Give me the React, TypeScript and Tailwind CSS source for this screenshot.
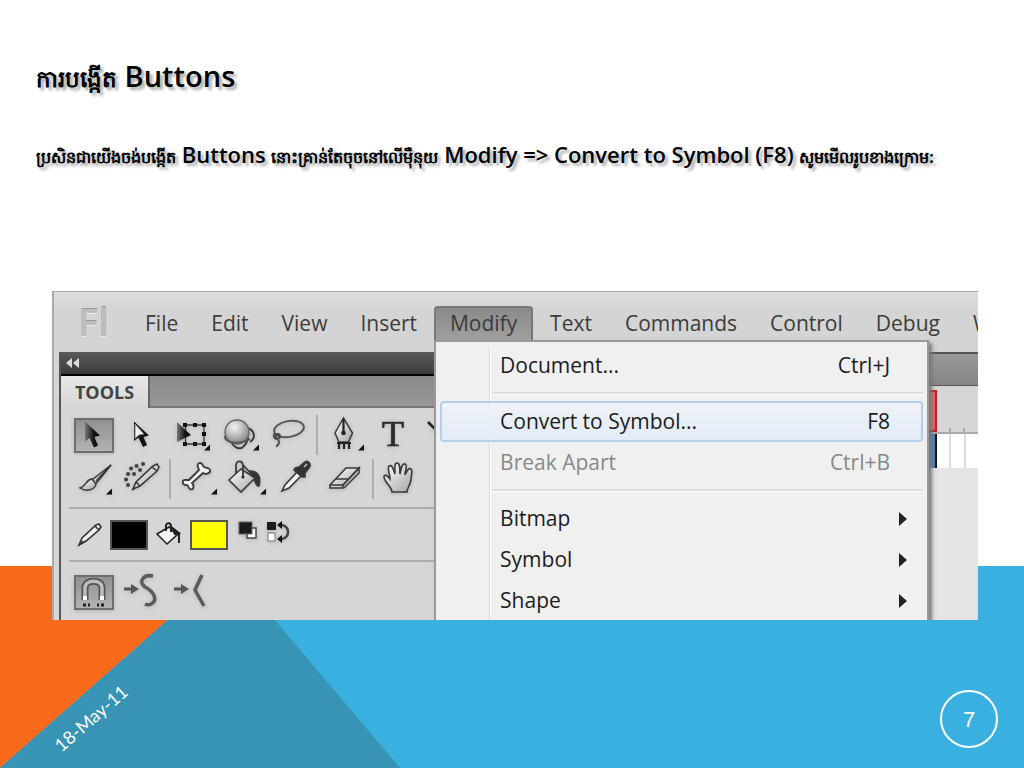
import type { ReactNode } from "react";

const MENUS_LEFT = ["File", "Edit", "View", "Insert"];
const MENUS_RIGHT = ["Text", "Commands", "Control", "Debug", "Window"];

type Entry = { label: string; keys?: string; sub?: boolean; active?: boolean; disabled?: boolean };

const GROUPS: Entry[][] = [
  [{ label: "Document...", keys: "Ctrl+J" }],
  [
    { label: "Convert to Symbol...", keys: "F8", active: true },
    { label: "Break Apart", keys: "Ctrl+B", disabled: true },
  ],
  [
    { label: "Bitmap", sub: true },
    { label: "Symbol", sub: true },
    { label: "Shape", sub: true },
  ],
];

function Flyout() {
  return <path d="M37 37.500L43 31.500V37.500Z" fill="#111" stroke="none" />;
}

function Tool({ label, selected, children }: { label: string; selected?: boolean; children: ReactNode }) {
  return (
    <button type="button" aria-label={label} className="h-11 w-[49px] shrink-0">
      <svg viewBox="0 0 49 44" className="h-11 w-[49px] drop-shadow-sm" fill="none" stroke="#3a3a3a" strokeWidth="1.6">
        {selected && <rect x="6" y="6" width="38" height="33" fill="url(#pressed)" stroke="#6e6e6e" strokeWidth="2" />}
        {children}
      </svg>
    </button>
  );
}

function ToolDivider() {
  return <span className="mx-[2px] h-10 w-[3px] shrink-0 self-center border-l-2 border-[#adadad]" />;
}

function Gradients() {
  return (
    <svg className="absolute size-0" aria-hidden="true">
      <defs>
        <linearGradient id="pressed" x1="0" y1="0" x2="0" y2="1">
          <stop offset="0" stopColor="#8f8f8f" />
          <stop offset="1" stopColor="#b4b4b4" />
        </linearGradient>
        <linearGradient id="dark" x1="0" y1="0" x2="1" y2="0">
          <stop offset="0" stopColor="#777" />
          <stop offset="0.6" stopColor="#111" />
        </linearGradient>
        <linearGradient id="metal" x1="0" y1="0" x2="1" y2="1">
          <stop offset="0" stopColor="#fff" />
          <stop offset="1" stopColor="#a5a5a5" />
        </linearGradient>
        <radialGradient id="ball" cx="0.4" cy="0.3" r="0.7">
          <stop offset="0" stopColor="#f6f6f6" />
          <stop offset="1" stopColor="#858585" />
        </radialGradient>
      </defs>
    </svg>
  );
}

function Toolbox() {
  return (
    <>
      <div className="flex h-11 overflow-hidden">
        <Tool label="Selection" selected>
          <path d="M16 8.500V28.500L20.500 25L25 34.500L29 32.500L25.500 24L31 22.500Z" fill="url(#dark)" stroke="none" />
        </Tool>
        <Tool label="Subselection">
          <path d="M16 8.500V28L20.500 24.500L25 34L29 32L25.500 24L31 22.500Z" fill="#111" stroke="none" />
          <path d="M17 11V25.500L21 22L26 21Z" fill="#f2f2f2" stroke="#777" strokeWidth="1" />
        </Tool>
        <Tool label="Free transform">
          <path d="M18.500 12H37V31H18.500Z" strokeWidth="1.3" />
          <path d="M10 9V29L24 22Z" fill="url(#dark)" stroke="none" />
          <path d="M16 10h4v4h-4zM26 10h4v4h-4zM35 10h4v4h-4zM35 19h4v4h-4zM35 29h4v4h-4zM26 29h4v4h-4zM16 29h4v4h-4z" fill="#111" stroke="none" />
          <Flyout />
        </Tool>
        <Tool label="3D rotation">
          <path d="M31 15C39 17 40 25 34 29M15 28C18 36 25 37 28 33C31 30 32 26 32 22" strokeWidth="2" />
          <circle cx="21" cy="19" r="12" fill="url(#ball)" stroke="#666" strokeWidth="1.3" />
          <path d="M9 23C7 30 24 32 34 26" stroke="#555" strokeWidth="1.6" />
          <Flyout />
        </Tool>
        <Tool label="Lasso">
          <ellipse cx="24" cy="16" rx="15" ry="8" transform="rotate(-10 24 16)" stroke="#555" strokeWidth="2" />
          <path d="M10 20C6 25 13 28 15 24C16 20 10 20 11 24C12 27 15 27 14 30C13 33 11 32 12 34" stroke="#444" strokeWidth="1.8" />
        </Tool>
        <ToolDivider />
        <Tool label="Pen">
          <path d="M22.500 5L14 20L18 29H27.500L31.500 20Z" fill="url(#metal)" strokeWidth="1.5" />
          <path d="M22.500 6V20M18 29V36M23 29V36M28 29V36M16 30H30" stroke="#222" strokeWidth="2.2" />
          <circle cx="22.5" cy="20" r="2.3" fill="#222" stroke="none" />
          <Flyout />
        </Tool>
        <Tool label="Text">
          <text x="23" y="33" textAnchor="middle" fill="#2b2b2b" stroke="#2b2b2b" strokeWidth="0.7" className="font-['Liberation_Serif',serif] text-[36px]">
            T
          </text>
        </Tool>
        <Tool label="Line">
          <path d="M9 9L18 18" stroke="#222" strokeWidth="2.5" />
        </Tool>
      </div>

      <div className="flex h-11 overflow-hidden">
        <Tool label="Brush">
          <path d="M42 8L28 19L23 23L26 27L30 23Z" fill="url(#metal)" strokeWidth="1.5" />
          <path d="M23 22C17 22 18 29 11 31C17 35 26 33 27 27Z" fill="url(#metal)" strokeWidth="1.5" />
          <path d="M42 8L27 24" stroke="#333" strokeWidth="1.5" />
          <Flyout />
        </Tool>
        <Tool label="Deco">
          <path d="M25 7h.1M18.500 9h.1M13 11.500h.1M10 17h.1M8 22.500h.1M10 28h.1M22 13h.1M16 17h.1" stroke="#444" strokeWidth="4" strokeLinecap="round" />
          <path d="M15 32L18 25L35 9L39 7L41 10L39 14L22 29Z" fill="url(#metal)" />
          <path d="M34 10L39 14M18 25L22 29M14 33L17 31" stroke="#333" strokeWidth="1.5" />
        </Tool>
        <ToolDivider />
        <Tool label="Bone">
          <path d="M26 10C24 6 30 4 31 9C33 12 37 10 38 13C39 16 34 18 31 16L20 26C23 29 21 34 18 32C16 31 17 29 15 28C10 29 9 22 14 23L17 23L27 13Z" transform="translate(-2)" fill="#f0f0f0" strokeWidth="1.8" />
          <Flyout />
        </Tool>
        <Tool label="Paint bucket">
          <path d="M27 14C36 14 38 21 36 29C33 30 33 25 31 23Z" fill="#333" />
          <path d="M6 23L18 12L32 21L18 35Z" fill="url(#metal)" />
          <path d="M13 16V9C13 3 19 3 20 8V19M20 8L30 19" strokeWidth="1.8" />
          <circle cx="20" cy="20" r="1.5" fill="#222" stroke="none" />
          <Flyout />
        </Tool>
        <Tool label="Eyedropper">
          <path d="M10 34L13 28L26 14L30 18L17 31Z" fill="#f4f4f4" />
          <path d="M23 11L27 10L33 5C36 3 40 7 37 11L33 16L33 20L30 20L22 13Z" fill="#333" />
          <path d="M32 10L35 7" stroke="#bbb" />
        </Tool>
        <Tool label="Eraser">
          <path d="M9 28L25 11H38L22 28V31H9Z" fill="url(#metal)" />
          <path d="M9 28H22L38 11V16L23 31M15 22H28" strokeWidth="1.5" />
        </Tool>
        <ToolDivider />
        <Tool label="Hand">
          <path d="M15 35C15 30 8 26 7 20C7 17 10 18 13 22C13 18 10 11 12 9C15 7 16 12 18 17C18 12 17 6 20 6C23 6 23 11 23 17C24 12 25 6 28 7C31 8 28 14 28 18C30 14 32 10 34 12C36 14 34 18 34 23C33 29 30 31 30 35Z" fill="url(#metal)" strokeWidth="1.6" />
        </Tool>
      </div>
    </>
  );
}

function Colors() {
  return (
    <div className="flex h-[51px] items-center gap-[7px] pl-2">
      <svg viewBox="0 0 26 28" className="h-7 w-[26px]" fill="none" stroke="#333" strokeWidth="1.6" aria-hidden="true">
        <path d="M2 24L5 17L19 4L22 3L24 6L22 9L9 20Z" fill="#eee" />
        <path d="M18 5L22 9M2 24L6 20" />
      </svg>
      <button type="button" aria-label="Stroke color" className="h-[30px] w-[38px] border-2 border-[#555] bg-black" />
      <svg viewBox="0 0 28 28" className="h-7 w-7" fill="none" stroke="#222" strokeWidth="2" aria-hidden="true">
        <path d="M2 13L14 6L23 13L12 23Z" fill="#f4f4f4" strokeWidth="1.6" />
        <path d="M11 10V4C12 1 16 2 16 5V11M16 6L24 13V22" />
        <path d="M16 6L24 12L20 13Z" fill="#222" />
      </svg>
      <button type="button" aria-label="Fill color" className="h-[30px] w-[38px] border-2 border-[#555] bg-[#ff0]" />
      <svg viewBox="0 0 58 30" className="h-[30px] w-[58px] drop-shadow-sm" aria-hidden="true">
        <rect x="12" y="8" width="9" height="10" fill="#fff" stroke="#444" strokeWidth="1.5" />
        <rect x="4" y="2" width="13" height="12" fill="#1b1b1b" stroke="#666" />
        <rect x="32" y="2" width="9" height="8" fill="#1b1b1b" />
        <rect x="33" y="13" width="7" height="8" fill="#fff" stroke="#777" />
        <path d="M45 5H47C55 7 55 17 47 19H45" fill="none" stroke="#444" strokeWidth="2.5" />
        <path d="M42 5L47 1V9ZM42 19L47 15V23Z" fill="#111" />
      </svg>
    </div>
  );
}

function Options() {
  return (
    <div className="flex h-[58px] items-end pb-[6px]">
      <Tool label="Snap to objects" selected>
        <path d="M16 30V18C16 9 33 9 33 18V30" stroke="#555" strokeWidth="7" />
        <path d="M16 30V18C16 9 33 9 33 18V30" stroke="#bdbdbd" strokeWidth="3.5" />
        <path d="M16 26V30M33 26V30" stroke="#fff" strokeWidth="4" />
        <path d="M14 35h3M19 35h2M28 35h2M32 35h3" stroke="#222" strokeWidth="3" />
      </Tool>
      <Tool label="Smooth">
        <path d="M6 19H14" stroke="#555" strokeWidth="3" />
        <path d="M13 14L21 19L13 24Z" fill="#555" stroke="none" />
        <path d="M35 6C25 4 20 12 27 17C35 21 41 30 33 34C31 35 29 35 27 34" stroke="#5b5b5b" strokeWidth="3.5" />
      </Tool>
      <Tool label="Straighten">
        <path d="M7 19H15" stroke="#555" strokeWidth="3" />
        <path d="M14 14L22 19L14 24Z" fill="#555" stroke="none" />
        <path d="M35 5L28 20L37 36" stroke="#5b5b5b" strokeWidth="3.5" />
      </Tool>
    </div>
  );
}

function ToolsPanel() {
  return (
    <aside className="w-[376px] shrink-0 border-l-2 border-[#555] bg-[#d6d6d6]">
      <div className="flex h-6 items-center border-b-2 border-black bg-linear-to-b from-[#5a5a5a] to-[#3d3d3d] pl-1">
        <svg viewBox="0 0 16 10" className="h-[10px] w-4" fill="#ddd" aria-hidden="true">
          <path d="M7 0V10L1 5ZM14 0V10L8 5Z" />
        </svg>
      </div>
      <div className="flex h-8 border-b-2 border-[#777] bg-linear-to-b from-[#8a8a8a] to-[#989898]">
        <h2 className="-mb-[2px] w-[89px] border-r-2 border-[#666] bg-linear-to-b from-[#e8e8e8] to-[#d6d6d6] text-center text-[18px] leading-8 font-bold text-[#444]">
          TOOLS
        </h2>
      </div>
      <div className="pt-[5px] pl-2">
        <Toolbox />
        <div className="mt-[6px] border-t-2 border-[#adadad]">
          <Colors />
        </div>
        <div className="border-t-2 border-[#adadad]">
          <Options />
        </div>
      </div>
    </aside>
  );
}

function Timeline() {
  return (
    <div className="flex-1 bg-[#e4e4e4]">
      <div className="h-[34px] border-t-2 border-b border-[#555] bg-linear-to-b from-[#9a9a9a] to-[#858585]" />
      <div className="flex h-12 items-end border-b-2 border-[#aaa] bg-[#d6d6d6] pl-[484px]">
        <div className="h-[42px] w-[18px] border-2 border-[#c81c24] bg-[#e8656b]" />
        <div className="ml-3 h-1 w-4 border-x-2 border-[#aaa]" />
      </div>
      <div className="flex h-[34px] bg-white pl-[484px]">
        <div className="w-[18px] border-r-2 border-[#111] bg-[#4c7fb3]" />
        <div className="w-[14px] border-r-2 border-[#ddd]" />
        <div className="w-[15px] border-r-2 border-[#ddd]" />
      </div>
    </div>
  );
}

function MenuRow({ entry }: { entry: Entry }) {
  return (
    <button
      type="button"
      role="menuitem"
      disabled={entry.disabled}
      className={
        "relative flex h-[41px] w-full items-center justify-between rounded-[4px] border-2 pr-[31px] pl-[58px] text-[21px] " +
        (entry.active ? "border-[#b4cfec] bg-linear-to-b from-[#f0f3f8]/80 to-[#deeafa]/80 " : "border-transparent ") +
        (entry.disabled ? "text-[#888]" : "text-[#1c1c1c]")
      }
    >
      <span>{entry.label}</span>
      {entry.keys && <span>{entry.keys}</span>}
      {entry.sub && (
        <svg viewBox="0 0 8 14" className="-mr-[17px] h-[14px] w-2" fill="#222" aria-hidden="true">
          <path d="M0 0L8 7L0 14Z" />
        </svg>
      )}
    </button>
  );
}

function ModifyMenu() {
  return (
    <div
      role="menu"
      className="absolute top-full left-0 z-10 w-[495px] border-2 border-[#999] bg-[#f0f0f0] px-1 pt-[3px] pb-2 shadow-[3px_3px_4px_#777]"
    >
      <div className="absolute inset-y-1 left-[53px] w-[2px] border-l border-[#ddd] bg-white" />
      {GROUPS.map((group, i) => (
        <div key={group[0].label}>
          {i > 0 && (
            <div className="flex h-[15px] items-center pl-[52px]">
              <div className="h-[3px] flex-1 border-t-2 border-[#ddd] bg-white" />
            </div>
          )}
          {group.map((entry) => (
            <MenuRow key={entry.label} entry={entry} />
          ))}
        </div>
      ))}
    </div>
  );
}

function MenuButton({ label }: { label: string }) {
  return (
    <button type="button" className="h-8 shrink-0 px-4">
      {label}
    </button>
  );
}

function FlashWindow() {
  return (
    <section className="mr-[46px] ml-[52px] overflow-hidden border-t border-l-2 border-[#a3a9ad] bg-[#d6d6d6] font-['Open_Sans','Noto_Sans',sans-serif]">
      <Gradients />
      <nav className="flex h-[60px] items-end gap-px bg-linear-to-b from-[#dedede] to-[#d4d4d4] to-30% pb-3 text-[21px] whitespace-nowrap text-[#3c3c3c]">
        <span className="w-[74px] shrink-0 pl-6 text-[38px] leading-[38px] font-semibold text-[#bdbdbd] [text-shadow:0_-1px_#999,0_1px_#eee]">
          Fl
        </span>
        {MENUS_LEFT.map((m) => (
          <MenuButton key={m} label={m} />
        ))}
        <div className="relative">
          <button
            type="button"
            className="block h-[34px] w-[99px] rounded-t-[4px] border-2 border-b-0 border-[#777] bg-linear-to-b from-[#8a8a8a] to-[#a0a0a0]"
          >
            Modify
          </button>
          <ModifyMenu />
        </div>
        {MENUS_RIGHT.map((m) => (
          <MenuButton key={m} label={m} />
        ))}
      </nav>
      <div className="flex pl-[5px]">
        <ToolsPanel />
        <Timeline />
      </div>
    </section>
  );
}

function Backdrop() {
  return (
    <svg
      viewBox="0 0 1024 202"
      preserveAspectRatio="none"
      className="absolute inset-x-0 bottom-0 -z-10 h-[202px] w-full"
      aria-hidden="true"
    >
      <rect width="1024" height="202" fill="#39b0e0" />
      <path d="M0 0H229L0 202Z" fill="#f96b1b" />
      <path d="M229 0L400 202H0Z" fill="#3894b4" />
    </svg>
  );
}

function Khmer({ children }: { children: ReactNode }) {
  return (
    <span lang="km" className="text-[16px] font-bold">
      {children}
    </span>
  );
}

export default function App() {
  return (
    <main className="relative isolate flex min-h-screen flex-col overflow-hidden bg-white">
      <Backdrop />
      <header className="h-[291px] px-9 pt-14 font-['Open_Sans','Noto_Sans',sans-serif] font-semibold text-black [text-shadow:3px_3px_3px_#aaa]">
        <h1 className="text-[29px] leading-10">
          <span lang="km" className="text-[23px] font-bold">
            ការបង្កើត
          </span>{" "}
          Buttons
        </h1>
        <p className="mt-9 text-[22px] leading-10">
          <Khmer>ប្រសិនជាយើងចង់បង្កើត</Khmer> Buttons <Khmer>នោះគ្រាន់តែចុចនៅលើម៉ឺនុយ</Khmer> Modify =&gt; Convert to Symbol
          (F8) <Khmer>សូមមើលរូបខាងក្រោម:</Khmer>
        </p>
      </header>
      <FlashWindow />
      <footer className="mt-auto flex items-end justify-between pr-[26px] pb-5 pl-[46px] text-white">
        <time dateTime="2011-05-18" className="mb-4 -rotate-41 font-['Lato',sans-serif] text-[18px] leading-7">
          18-May-11
        </time>
        <span className="flex size-[58px] items-center justify-center rounded-full border-2 border-white font-['Liberation_Sans',sans-serif] text-[22px]">
          7
        </span>
      </footer>
    </main>
  );
}
